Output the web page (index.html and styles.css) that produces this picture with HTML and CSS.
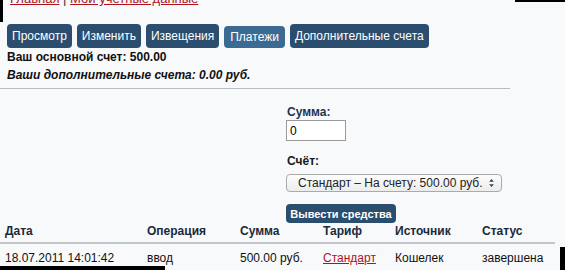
FILE: index.html
```html
<!DOCTYPE html>
<html lang="ru">
<head>
    <meta charset="UTF-8" />
    <title>Платежи</title>
    <link rel="stylesheet" href="styles.css">
</head>
<body>

<div class="page">
    <div class="crumbs">
        <a href="#">Главная</a> | <a href="#">Мои учетные данные</a>
    </div>

    <!-- Вкладки аккаунта -->
    <div class="tabs">
        <a href="#" class="tab">Просмотр</a>
        <a href="#" class="tab">Изменить</a>
        <a href="#" class="tab">Извещения</a>
        <a href="#" class="tab active">Платежи</a>
        <a href="#" class="tab">Дополнительные счета</a>
    </div>

    <p class="balance">Ваш основной счет: 500.00</p>
    <p class="balance extra">Ваши дополнительные счета: 0.00 руб.</p>
    <hr class="sep">

    <form class="withdraw">
        <label class="field-label" for="sum">Сумма:</label>
        <input class="sum-input" id="sum" type="text" value="0">
        <label class="field-label acc" for="acc">Счёт:</label>
        <div class="select">
            <span>Стандарт – На счету: 500.00 руб.</span>
            <span class="arrows">
                <svg viewBox="0 0 6 10" width="5" height="8"><path d="M3 0L6 3.5H0z M3 10L0 6.5H6z" fill="#444"/></svg>
            </span>
        </div>
        <button type="button" class="submit">Вывести средства</button>
    </form>

    <table class="history">
        <thead>
            <tr>
                <th class="c-date">Дата</th>
                <th class="c-op">Операция</th>
                <th class="c-sum">Сумма</th>
                <th class="c-tar">Тариф</th>
                <th class="c-src">Источник</th>
                <th class="c-st">Статус</th>
            </tr>
        </thead>
        <tbody>
            <tr>
                <td>18.07.2011 14:01:42</td>
                <td>ввод</td>
                <td>500.00 руб.</td>
                <td><a href="#">Стандарт</a></td>
                <td>Кошелек</td>
                <td>завершена</td>
            </tr>
        </tbody>
    </table>
</div>

<!-- края скана -->
<div class="edge edge-left"></div>
<div class="edge edge-top"></div>
<div class="edge edge-bottom"></div>
<div class="edge edge-right"></div>

</body>
</html>
```

FILE: styles.css
```css
:root {
    --btn: #2b4e6f;
    --btn-active: #3b6b93;
    --title: #1d3550;
    --link: #b0121b;
    --bg: #f8f9fb;
}

* {
    box-sizing: border-box;
}

body {
    margin: 0;
    background: var(--bg);
    font-family: "Liberation Sans", Arial, sans-serif;
    font-size: 12px;
    color: #111;
    width: 565px;
    height: 270px;
    overflow: hidden;
    position: relative;
}

.crumbs {
    margin-top: -9px;
    padding-left: 10px;
    font-size: 13px;
    line-height: 16px;
    color: #333;
}

.crumbs a {
    color: var(--link);
}

.tabs {
    display: flex;
    gap: 5px;
    padding: 17px 0 0 7px;
}

.tab {
    display: block;
    background: var(--btn);
    color: #fff;
    text-decoration: none;
    font-size: 12px;
    line-height: 22px;
    padding: 1px 5px 0;
    border-radius: 4px;
}

.tab.active {
    background: var(--btn-active);
    margin-top: 2px;
    padding: 0 6px;
}

.balance {
    margin: 2px 0 0 7px;
    font-weight: bold;
    font-size: 12px;
    line-height: 15px;
    color: #111;
}

.balance.extra {
    margin-top: 3px;
    font-style: italic;
}

.sep {
    margin: 5px 55px 0 0;
    border: 0;
    border-top: 1px solid #b8bcc2;
}

.withdraw {
    display: flex;
    flex-direction: column;
    align-items: flex-start;
    padding: 16px 0 0 286px;
}

.field-label {
    font-weight: bold;
    color: var(--title);
    font-size: 12px;
    line-height: 14px;
    margin-left: 1px;
}

.sum-input {
    margin-top: 1px;
    width: 60px;
    height: 21px;
    border: 1px solid #9a9a9a;
    background: #fff;
    font-family: "Liberation Sans", Arial, sans-serif;
    font-size: 12px;
    padding: 0 3px;
}

.field-label.acc {
    margin-top: 13px;
    color: #1a1a1a;
}

.select {
    margin-top: 6px;
    width: 216px;
    height: 18px;
    border: 1px solid #aaa;
    border-radius: 4px;
    background: linear-gradient(#fdfdfd, #ececec);
    display: flex;
    align-items: center;
    justify-content: space-between;
    padding: 0 7px 0 11px;
    font-family: "Liberation Sans", Arial, sans-serif;
    font-size: 12px;
    color: #222;
}

.arrows {
    display: flex;
}

.submit {
    margin-top: 12px;
    background: var(--btn);
    color: #fff;
    border: 0;
    border-radius: 4px;
    height: 19px;
    width: 110px;
    padding: 0;
    font-family: "Liberation Sans", Arial, sans-serif;
    font-weight: bold;
    font-size: 11px;
}

.history {
    margin-top: -1px;
    width: 555px;
    border-collapse: collapse;
}

.history th {
    text-align: left;
    font-weight: bold;
    color: #1a2a3c;
    font-size: 12px;
    padding: 2px 0 4px 5px;
    border-bottom: 2px solid #c4c7cc;
}

.history td {
    font-size: 12px;
    padding: 7px 0 5px 5px;
    border-bottom: 1px solid #c4c7cc;
}

.history td a {
    color: var(--link);
}

.c-date { width: 142px; }
.c-op { width: 93px; }
.c-sum { width: 83px; }
.c-tar { width: 72px; }
.c-src { width: 87px; }

.edge {
    position: absolute;
    background: #000;
}

.edge-left { left: 0; top: 0; width: 3px; height: 22px; }
.edge-top { left: 515px; top: 0; width: 50px; height: 2px; }
.edge-bottom { left: 0; top: 266px; width: 165px; height: 4px; }
.edge-right { left: 560px; top: 247px; width: 5px; height: 23px; }
```
